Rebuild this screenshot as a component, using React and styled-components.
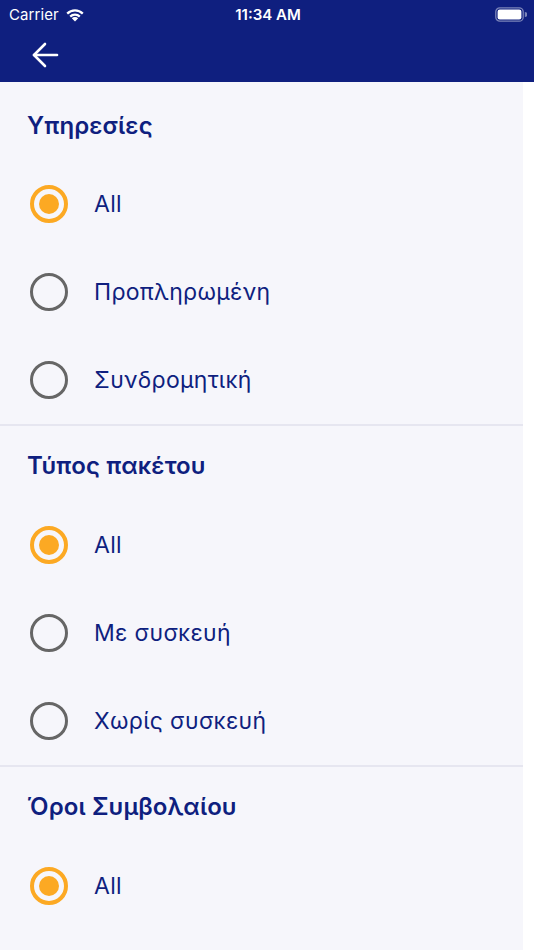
import React, { useState } from 'react';
import styled, { createGlobalStyle } from 'styled-components';

const GlobalStyle = createGlobalStyle`
  html, body {
    margin: 0;
    padding: 0;
    background: #ffffff;
    font-family: Inter, 'Noto Sans', sans-serif;
  }
`;

const NAVY = '#0f1f7f';
const ORANGE = '#fca923';

const Page = styled.div`
  width: 534px;
  height: 950px;
  overflow: hidden;
  background: #ffffff;
  display: flex;
  flex-direction: column;
`;

const TopBar = styled.div`
  background: ${NAVY};
  height: 82px;
  flex-shrink: 0;
  color: #fff;
`;

const StatusBar = styled.div`
  height: 28px;
  display: grid;
  grid-template-columns: 1fr auto 1fr;
  align-items: center;
  padding: 0 7px 0 9px;
  font-size: 15px;
`;

const Carrier = styled.div`
  display: flex;
  align-items: center;
  gap: 6px;
  letter-spacing: 0.1px;
`;

const Clock = styled.div`
  font-weight: 600;
`;

const Battery = styled.div`
  justify-self: end;
  display: flex;
  align-items: center;
`;

const NavRow = styled.div`
  height: 54px;
  display: flex;
  align-items: center;
  padding-left: 31px;
`;

const BackButton = styled.button`
  background: none;
  border: none;
  padding: 0;
  display: flex;
  cursor: pointer;
`;

const Content = styled.div`
  width: 523px;
  flex: 1;
  background: #f6f6fb;
`;

const Section = styled.section`
  border-bottom: 2px solid #e6e6f0;

  &:last-child {
    border-bottom: none;
  }
`;

const SectionTitle = styled.h2`
  margin: 0;
  height: ${p => (p.first ? 78 : 75)}px;
  display: flex;
  align-items: center;
  padding: ${p => (p.first ? 8 : 4)}px 27px 0;
  box-sizing: border-box;
  font-size: 24px;
  font-weight: 600;
  color: ${NAVY};
  letter-spacing: 0.1px;
`;

const Option = styled.label`
  height: 88px;
  display: flex;
  align-items: center;
  gap: 26px;
  padding-left: 30px;
  cursor: pointer;
`;

const RadioCircle = styled.span`
  width: 38px;
  height: 38px;
  box-sizing: border-box;
  border-radius: 50%;
  border: ${p => (p.checked ? `4px solid ${ORANGE}` : '3.5px solid #666666')};
  display: flex;
  align-items: center;
  justify-content: center;

  &::after {
    content: '';
    width: 20px;
    height: 20px;
    border-radius: 50%;
    background: ${ORANGE};
    display: ${p => (p.checked ? 'block' : 'none')};
  }
`;

const OptionLabel = styled.span`
  font-size: 23px;
  color: ${NAVY};
  letter-spacing: 0.3px;
`;

const sections = [
  { title: 'Υπηρεσίες', options: ['All', 'Προπληρωμένη', 'Συνδρομητική'] },
  { title: 'Τύπος πακέτου', options: ['All', 'Με συσκευή', 'Χωρίς συσκευή'] },
  { title: 'Όροι Συμβολαίου', options: ['All'] },
];

const WifiIcon = () => (
  <svg width="20" height="15" viewBox="0 0 20 15">
    <path d="M10 14.5 L6.8 11.2 A4.6 4.6 0 0 1 13.2 11.2 Z" fill="#fff" />
    <path d="M4.4 8.8 A8 8 0 0 1 15.6 8.8 L14 10.4 A5.8 5.8 0 0 0 6 10.4 Z" fill="#fff" />
    <path d="M1.4 5.8 A12.3 12.3 0 0 1 18.6 5.8 L17 7.4 A10 10 0 0 0 3 7.4 Z" fill="#fff" />
  </svg>
);

const BatteryIcon = () => (
  <svg width="32" height="15" viewBox="0 0 32 15">
    <rect x="0.8" y="0.8" width="27.4" height="13.4" rx="4" fill="none" stroke="rgba(255,255,255,0.45)" strokeWidth="1.3" />
    <rect x="2.6" y="2.6" width="23.8" height="9.8" rx="2.2" fill="#fff" />
    <path d="M29.8 5 a2.4 2.4 0 0 1 0 5 Z" fill="rgba(255,255,255,0.45)" />
  </svg>
);

const BackArrow = () => (
  <svg width="28" height="28" viewBox="0 0 28 28" fill="none" stroke="#fff" strokeWidth="2.6" strokeLinecap="round" strokeLinejoin="round">
    <path d="M26 14 H3" />
    <path d="M14 3 L3 14 L14 25" />
  </svg>
);

export default function App() {
  const [selected, setSelected] = useState(sections.map(() => 0));

  const pick = (si, oi) => {
    setSelected(prev => prev.map((v, i) => (i === si ? oi : v)));
  };

  return (
    <Page>
      <GlobalStyle />
      <TopBar>
        <StatusBar>
          <Carrier>
            Carrier <WifiIcon />
          </Carrier>
          <Clock>11:34 AM</Clock>
          <Battery>
            <BatteryIcon />
          </Battery>
        </StatusBar>
        <NavRow>
          <BackButton aria-label="Back">
            <BackArrow />
          </BackButton>
        </NavRow>
      </TopBar>

      <Content>
        {sections.map((section, si) => (
          <Section key={section.title}>
            <SectionTitle first={si === 0}>{section.title}</SectionTitle>
            {section.options.map((opt, oi) => (
              <Option key={opt} onClick={() => pick(si, oi)}>
                <RadioCircle checked={selected[si] === oi} />
                <OptionLabel>{opt}</OptionLabel>
              </Option>
            ))}
          </Section>
        ))}
      </Content>
    </Page>
  );
}
